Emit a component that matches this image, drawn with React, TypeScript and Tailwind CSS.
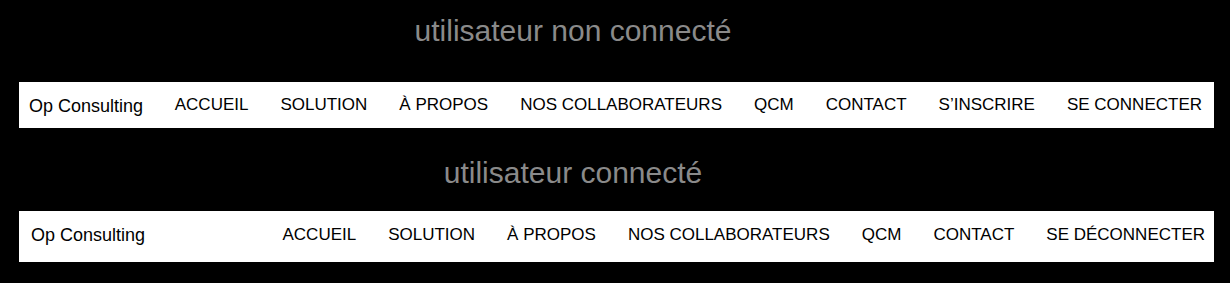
import React from 'react';

const guestLinks = ['ACCUEIL', 'SOLUTION', 'À PROPOS', 'NOS COLLABORATEURS', 'QCM', 'CONTACT', 'S’INSCRIRE', 'SE CONNECTER'];
const userLinks = ['ACCUEIL', 'SOLUTION', 'À PROPOS', 'NOS COLLABORATEURS', 'QCM', 'CONTACT', 'SE DÉCONNECTER'];

const App = () => {
  return (
    <div className="w-[1230px] h-[283px] bg-black overflow-hidden font-['Liberation_Sans',Arial,sans-serif]">
      {/* Guest header */}
      <h2 className="pt-[13px] pr-[84px] text-center text-[30px] leading-[36px] text-[#8a8a8a]">
        utilisateur non connecté
      </h2>
      <nav className="mt-[33px] ml-[19px] mr-[16px] h-[46px] bg-white flex items-center justify-between pl-[10px] pr-[12px] text-black">
        <span className="text-[18px] pt-[2px]">Op Consulting</span>
        <ul className="flex items-center gap-[32px] text-[17px]">
          {guestLinks.map((link) => (
            <li key={link}>{link}</li>
          ))}
        </ul>
      </nav>

      {/* Logged-in header */}
      <h2 className="mt-[27px] pr-[84px] text-center text-[30px] leading-[36px] text-[#8a8a8a]">
        utilisateur connecté
      </h2>
      <nav className="mt-[20px] ml-[19px] mr-[16px] h-[51px] bg-white flex items-center justify-between pl-[12px] pr-[9px] pb-[4px] text-black">
        <span className="text-[18px] pt-[2px]">Op Consulting</span>
        <ul className="flex items-center gap-[32px] text-[17px]">
          {userLinks.map((link) => (
            <li key={link}>{link}</li>
          ))}
        </ul>
      </nav>
    </div>
  );
};

export default App;
